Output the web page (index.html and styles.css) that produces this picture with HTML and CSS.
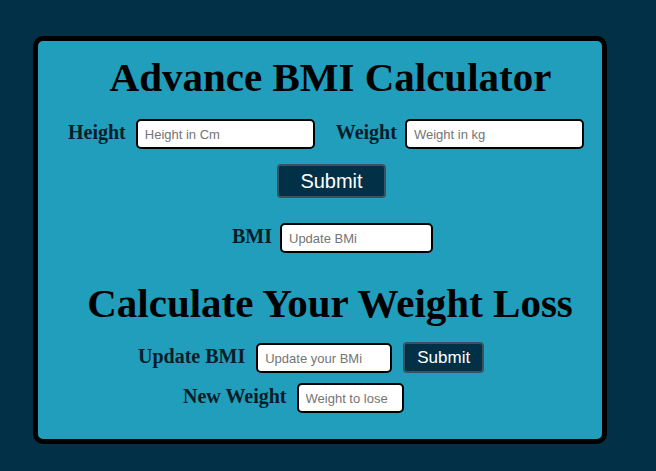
FILE: index.html
```html
<!DOCTYPE html>
<html lang="en">
<head>
<meta charset="utf-8">
<title>Advance BMI Calculator</title>
<link rel="stylesheet" href="styles.css">
</head>
<body>
  <main class="card">
    <h1 class="title">Advance BMI Calculator</h1>
    <div class="row row-measure">
      <label class="label" for="height">Height</label>
      <input class="field field-wide" id="height" type="text" placeholder="Height in Cm">
      <label class="label label-weight" for="weight">Weight</label>
      <input class="field field-wide" id="weight" type="text" placeholder="Weight in kg">
    </div>
    <div class="row row-submit">
      <button class="btn btn-large" type="button">Submit</button>
    </div>
    <div class="row row-bmi">
      <label class="label" for="bmi">BMI</label>
      <input class="field field-bmi" id="bmi" type="text" placeholder="Update BMi">
    </div>
    <h2 class="title title-loss">Calculate Your Weight Loss</h2>
    <div class="row row-update">
      <label class="label" for="ubmi">Update BMI</label>
      <input class="field field-update" id="ubmi" type="text" placeholder="Update your BMi">
      <button class="btn btn-small" type="button">Submit</button>
    </div>
    <div class="row row-new">
      <label class="label" for="nw">New Weight</label>
      <input class="field field-new" id="nw" type="text" placeholder="Weight to lose">
    </div>
  </main>
</body>
</html>
```

FILE: styles.css
```css
* { box-sizing: border-box; }

html, body {
  margin: 0;
  padding: 0;
}

body {
  background: #023047;
  width: 656px;
  height: 471px;
  overflow: hidden;
  padding: 36px 0 0 33px;
  font-family: "Liberation Serif", "Times New Roman", serif;
}

.card {
  width: 574px;
  height: 408px;
  background: #219ebc;
  border: 5px solid #000;
  border-radius: 10px;
  display: flex;
  flex-direction: column;
}

.title {
  margin: 13px 0 0 0;
  padding-left: 21px;
  font-size: 41px;
  line-height: 46px;
  font-weight: bold;
  text-align: center;
  color: #000;
}

.title-loss {
  margin-top: 27px;
  padding-left: 20px;
}

.row {
  display: flex;
  align-items: baseline;
  gap: 10px;
}

.row-measure { margin-top: 19px; padding-left: 30px; }
.row-submit { margin-top: 15px; padding-left: 239px; }
.row-bmi { margin-top: 25px; padding-left: 194px; gap: 8px; }
.row-update { margin-top: 16px; padding-left: 100px; gap: 11px; }
.row-new { margin-top: 10px; padding-left: 145px; }

.label {
  font-family: "Liberation Serif", "Times New Roman", serif;
  font-size: 20px;
  font-weight: bold;
  color: #061d29;
}

.label-weight { margin-left: 11px; margin-right: -2px; }

.field {
  height: 30px;
  border: 2px solid #000;
  border-radius: 5px;
  background: #fff;
  padding: 0 7px;
  font-family: "Liberation Sans", Arial, sans-serif;
  font-size: 13px;
  color: #222;
  outline: none;
}

.field::placeholder { color: #757575; }

.field-wide { width: 179px; }
.field-bmi { width: 153px; }
.field-update { width: 136px; }
.field-new { width: 107px; }

.btn {
  background: #023047;
  color: #fff;
  border: 2px solid #3a5160;
  border-radius: 4px;
  font-family: "Liberation Sans", Arial, sans-serif;
  padding: 0;
}

.btn-large {
  width: 109px;
  height: 34px;
  font-size: 20px;
}

.btn-small {
  width: 81px;
  height: 31px;
  font-size: 17px;
}
```
